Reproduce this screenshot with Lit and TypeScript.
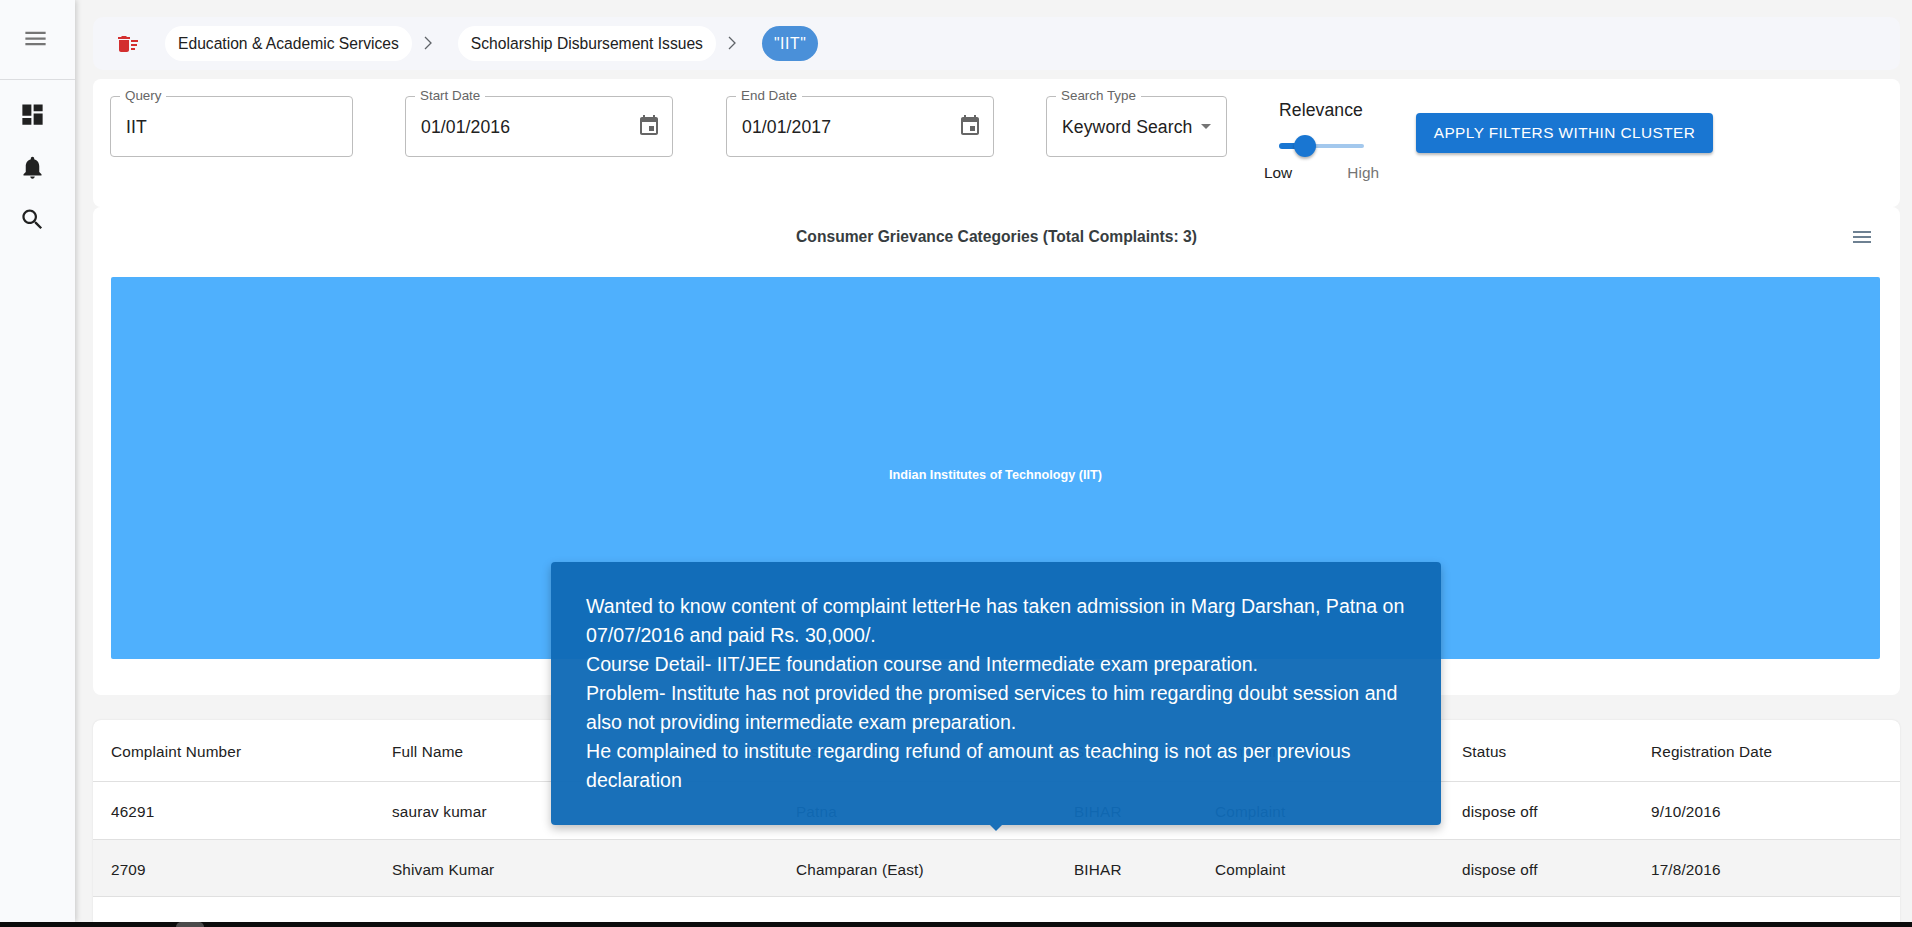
import { LitElement, html, css, svg } from "lit";
import { customElement } from "lit/decorators.js";

const P = {
  menu: "M3 18h18v-2H3v2zm0-5h18v-2H3v2zm0-7v2h18V6H3z",
  dash: "M3 13h8V3H3v10zm0 8h8v-6H3v6zm10 0h8V11h-8v10zm0-18v6h8V3h-8z",
  bell: "M12 22c1.1 0 2-.9 2-2h-4c0 1.1.89 2 2 2zm6-6v-5c0-3.07-1.64-5.64-4.5-6.32V4c0-.83-.67-1.5-1.5-1.5s-1.5.67-1.5 1.5v.68C7.63 5.36 6 7.92 6 11v5l-2 2v1h16v-1l-2-2z",
  search: "M15.5 14h-.79l-.28-.27C15.41 12.59 16 11.11 16 9.5 16 5.91 13.09 3 9.5 3S3 5.91 3 9.5 5.91 16 9.5 16c1.61 0 3.09-.59 4.23-1.57l.27.28v.79l5 4.99L20.49 19l-4.99-5zm-6 0C7.01 14 5 11.99 5 9.5S7.01 5 9.5 5 14 7.01 14 9.5 11.99 14 9.5 14z",
  sweep: "M15 16h4v2h-4zm0-8h7v2h-7zm0 4h6v2h-6zM3 18c0 1.1.9 2 2 2h6c1.1 0 2-.9 2-2V8H3v10zM14 5h-3l-1-1H6L5 5H2v2h12z",
  event: "M17 12h-5v5h5v-5zM16 1v2H8V1H6v2H5c-1.11 0-1.99.9-1.99 2L3 19c0 1.1.89 2 2 2h14c1.1 0 2-.9 2-2V5c0-1.1-.9-2-2-2h-1V1h-2zm3 18H5V8h14v11z",
};

const icon = (d: string, cls: string) =>
  html`<svg class=${cls} viewBox="0 0 24 24">${svg`<path d=${d}></path>`}</svg>`;

const chevron = html`<svg class="chev" viewBox="0 0 10 14"><polyline points="2,1 8,7 2,13"></polyline></svg>`;

const rows = [
  ["46291", "saurav kumar", "Patna", "BIHAR", "Complaint", "dispose off", "9/10/2016"],
  ["2709", "Shivam Kumar", "Champaran (East)", "BIHAR", "Complaint", "dispose off", "17/8/2016"],
];
const heads = ["Complaint Number", "Full Name", "District", "State", "Complaint Type", "Status", "Registration Date"];

@customElement("app-root")
export class AppRoot extends LitElement {
  static styles = css`
    :host {
      display: flex;
      flex-direction: column;
      position: relative;
      height: 927px;
      overflow: hidden;
      font-family: "Liberation Sans", Arial, sans-serif;
      color: #212121;
      background: #f4f4f4;
    }
    .frame { flex: 1; display: flex; min-height: 0; }
    .taskbar { height: 5px; background: #0c0c0c; display: flex; padding-left: 176px; }
    .taskbar i { width: 28px; height: 5px; background: #4a4a4a; border-radius: 8px 8px 0 0; }

    .side {
      width: 75px; flex: none; background: #f9fafc;
      box-shadow: 1px 0 6px rgba(0,0,0,.2);
      display: flex; flex-direction: column; align-items: flex-start;
      position: relative;
    }
    .side-head {
      align-self: stretch; height: 80px; border-bottom: 1px solid #dcdde0;
      display: flex; align-items: center; justify-content: center; padding: 0 4px 3px 0; box-sizing: border-box;
    }
    .side svg { width: 27px; height: 27px; fill: #212121; display: block; }
    .side .m { fill: #757575; }
    .nav { display: flex; flex-direction: column; gap: 25.5px; padding: 21px 0 0 19px; }

    .content { flex: 1; min-width: 0; padding: 17px 12px 0 18px; display: flex; flex-direction: column; }

    .crumbs {
      height: 53px; background: #f5f6fa; border-radius: 10px; display: flex; align-items: center;
      padding: 0 0 0 23px; margin-bottom: 9px;
    }
    .crumbs .trash { width: 24px; height: 24px; fill: #d32f2f; margin-right: 25px; margin-top: 1px; }
    .pill {
      height: 35px; box-sizing: border-box; border-radius: 18px; background: #fff; display: flex; align-items: center; padding: 1px 13px 0;
      font-size: 15.65px; letter-spacing: 0; color: #212121; white-space: nowrap;
    }
    .pill.on { background: #4a90d9; color: #fff; padding: 1px 12px 0; letter-spacing: .6px; }
    .chev { width: 10px; height: 14px; fill: none; stroke: #5f6368; stroke-width: 1.3; margin: -2px 25px 0 11px; }

    .card { background: #fff; border-radius: 8px; }
    .filters { height: 128px; padding: 17px 0 0 17px; box-sizing: border-box; display: flex; align-items: flex-start; }
    .field {
      position: relative; height: 61px; box-sizing: border-box; border: 1px solid #bdbdbd; border-radius: 4px;
      display: flex; align-items: center; justify-content: space-between;
      padding: 0 11px 0 15px; font-size: 17.6px; letter-spacing: .1px; color: #212121;
    }
    .field label {
      position: absolute; left: 9px; top: -9px; padding: 0 5px; background: #fff;
      font-size: 13.4px; line-height: 15px; color: #666; letter-spacing: 0;
    }
    .f-q { width: 243px; margin-right: 52px; }
    .f-s { width: 268px; margin-right: 53px; }
    .f-e { width: 268px; margin-right: 52px; }
    .f-t { width: 181px; padding-right: 15px; }
    .field .cal { width: 24px; height: 24px; fill: #666; margin-top: -2px; }
    .val { margin-top: 1px; white-space: nowrap; }
    .caret { width: 0; height: 0; border-left: 5px solid transparent; border-right: 5px solid transparent; border-top: 5px solid #757575; }

    .rel { width: 112px; margin-left: 37px; margin-top: 4px; display: flex; flex-direction: column; align-items: stretch; }
    .rel-t { text-align: center; font-size: 17.6px; line-height: 20px; letter-spacing: .1px; margin-left: 2px; }
    .slider { position: relative; height: 8px; margin: 22px 0 0 15px; width: 85px; display: flex; align-items: center; }
    .slider .a { width: 26px; height: 6px; background: #1976d2; border-radius: 3px 0 0 3px; }
    .slider .b { flex: 1; height: 4px; background: #a3c8ed; border-radius: 0 2px 2px 0; }
    .slider .t {
      position: absolute; left: 15px; top: -7px; width: 22px; height: 22px; border-radius: 50%; background: #1976d2;
      box-shadow: 0 2px 3px rgba(0,0,0,.3);
    }
    .ends { display: flex; justify-content: space-between; font-size: 15.4px; line-height: 18px; margin-top: 14px; letter-spacing: 0; }
    .ends .hi { color: #757575; margin-right: -3px; }

    .btn {
      margin: 17px 0 0 40px; width: 297px; height: 40px; background: #1976d2; color: #fff; border-radius: 4px;
      display: flex; align-items: center; justify-content: center;
      font-size: 15.4px; font-weight: 400; letter-spacing: .42px; box-shadow: 0 2px 3px rgba(0,0,0,.28);
    }

    .chart { height: 488px; box-sizing: border-box; padding: 0 20px 36px 18px; display: flex; flex-direction: column; }
    .chart-head { height: 70px; display: flex; align-items: center; position: relative; flex: none; padding-bottom: 11px; box-sizing: border-box; }
    .chart-title {
      flex: 1; text-align: center; font-size: 15.64px; font-weight: 700; color: #373d3f; letter-spacing: 0;
      padding-left: 32px;
    }
    .chart-head svg { width: 24px; height: 24px; fill: #6e8192; margin-right: 6px; }
    .tree {
      flex: 1; background: #4fb0fd; border-radius: 2px; display: flex; align-items: center; justify-content: center;
      color: #fff; font-weight: 700; font-size: 12.66px; letter-spacing: 0;
      padding-top: 13px; box-sizing: border-box;
    }

    .table { margin-top: 25px; flex: 1; min-height: 0; border-radius: 8px 8px 0 0; box-shadow: 0 0 2px rgba(0,0,0,.1); font-size: 15.3px; letter-spacing: .17px; }
    .row {
      display: grid; grid-template-columns: 281px 404px 278px 141px 247px 189px 1fr;
      padding: 2px 0 0 18px; align-items: center; border-bottom: 1px solid #e0e0e0; box-sizing: border-box;
    }
    .row.h { height: 62px; }
    .row.r1 { height: 58px; }
    .row.r2 { height: 57px; background: #f4f4f4; padding-top: 3px; }

    .tip {
      position: absolute; left: 551px; top: 562px; width: 890px; height: 263px; box-sizing: border-box;
      background: rgba(16,106,182,.96); color: #fff; border-radius: 4px; padding: 30px 30px 0 35px;
      font-size: 19.6px; line-height: 29px; letter-spacing: 0;
      box-shadow: 0 4px 10px rgba(0,0,0,.25);
    }
    .tip::after {
      content: ""; position: absolute; left: 439px; top: 100%;
      border-left: 6px solid transparent; border-right: 6px solid transparent; border-top: 6px solid #1a70b9;
    }
  `;

  render() {
    return html`
      <div class="frame">
        <aside class="side">
          <div class="side-head">${icon(P.menu, "m")}</div>
          <nav class="nav">
            ${icon(P.dash, "")}${icon(P.bell, "")}${icon(P.search, "")}
          </nav>
        </aside>
        <main class="content">
          <div class="crumbs">
            ${icon(P.sweep, "trash")}
            <div class="pill">Education &amp; Academic Services</div>${chevron}
            <div class="pill">Scholarship Disbursement Issues</div>${chevron}
            <div class="pill on">"IIT"</div>
          </div>
          <section class="card filters">
            <div class="field f-q"><label>Query</label><span class="val">IIT</span></div>
            <div class="field f-s"><label>Start Date</label><span class="val">01/01/2016</span>${icon(P.event, "cal")}</div>
            <div class="field f-e"><label>End Date</label><span class="val">01/01/2017</span>${icon(P.event, "cal")}</div>
            <div class="field f-t"><label>Search Type</label><span class="val">Keyword Search</span><span class="caret"></span></div>
            <div class="rel">
              <div class="rel-t">Relevance</div>
              <div class="slider"><span class="a"></span><span class="b"></span><span class="t"></span></div>
              <div class="ends"><span>Low</span><span class="hi">High</span></div>
            </div>
            <div class="btn">APPLY FILTERS WITHIN CLUSTER</div>
          </section>
          <section class="card chart">
            <div class="chart-head">
              <div class="chart-title">Consumer Grievance Categories (Total Complaints: 3)</div>
              ${icon(P.menu, "")}
            </div>
            <div class="tree">Indian Institutes of Technology (IIT)</div>
          </section>
          <section class="card table">
            <div class="row h">${heads.map((h) => html`<div>${h}</div>`)}</div>
            ${rows.map((r, i) => html`<div class="row ${i ? "r2" : "r1"}">${r.map((c) => html`<div>${c}</div>`)}</div>`)}
          </section>
        </main>
      </div>
      <div class="taskbar"><i></i></div>
      <div class="tip">
        <div>Wanted to know content of complaint letterHe has taken admission in Marg Darshan, Patna on 07/07/2016 and paid Rs. 30,000/.</div>
        <div>Course Detail- IIT/JEE foundation course and Intermediate exam preparation.</div>
        <div>Problem- Institute has not provided the promised services to him regarding doubt session and also not providing intermediate exam preparation.</div>
        <div>He complained to institute regarding refund of amount as teaching is not as per previous declaration</div>
      </div>
    `;
  }
}
